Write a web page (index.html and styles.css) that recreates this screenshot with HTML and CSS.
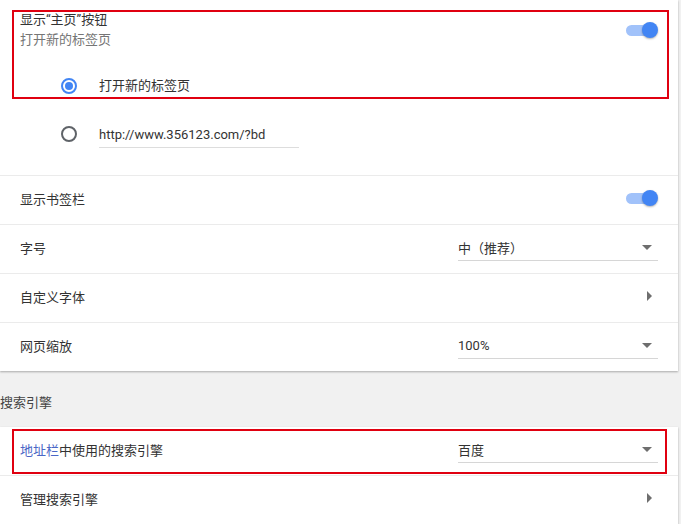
FILE: index.html
```html
<html>
<head>
    <meta charset="utf-8">
    <link rel="stylesheet" href="styles.css">
</head>
<body>
    <div class="page">
        <div class="card">
            <div class="home">
                <div class="home-head">
                    <div class="home-text">
                        <div class="label">显示“主页”按钮</div>
                        <div class="sub">打开新的标签页</div>
                    </div>
                    <span class="toggle"></span>
                </div>
                <div class="radios">
                    <div class="radio-row">
                        <span class="radio checked"></span>
                        <span class="label">打开新的标签页</span>
                    </div>
                    <div class="radio-row">
                        <span class="radio"></span>
                        <span class="url">http://www.356123.com/?bd</span>
                    </div>
                </div>
                <div class="mark mark-home"></div>
            </div>
            <div class="row">
                <span class="label">显示书签栏</span>
                <span class="toggle"></span>
            </div>
            <div class="row">
                <span class="label">字号</span>
                <div class="select"><span class="cjk">中（推荐）</span><i class="arrow-down"></i></div>
            </div>
            <div class="row">
                <span class="label">自定义字体</span>
                <i class="arrow-right"></i>
            </div>
            <div class="row">
                <span class="label">网页缩放</span>
                <div class="select"><span>100%</span><i class="arrow-down"></i></div>
            </div>
        </div>

        <div class="section-title">搜索引擎</div>

        <div class="card">
            <div class="row">
                <span class="label"><span class="link">地址栏</span>中使用的搜索引擎</span>
                <div class="select"><span>百度</span><i class="arrow-down"></i></div>
                <div class="mark mark-engine"></div>
            </div>
            <div class="row">
                <span class="label">管理搜索引擎</span>
                <i class="arrow-right"></i>
            </div>
        </div>
    </div>
</body>
</html>
```

FILE: styles.css
```css
html, body{
    margin: 0;
    padding: 0;
    background: #f1f1f1;
    font-family: Roboto, "Noto Sans CJK SC", sans-serif;
    font-size: 13px;
    color: #333;
}
.page{
    width: 681px;
}
.card{
    width: 678px;
    background: #fff;
    box-shadow: 0 1px 2px rgba(0,0,0,.3);
}
.home{
    position: relative;
    padding: 10px 20px 17px;
    border-bottom: 1px solid #ebebeb;
}
.home-head{
    display: flex;
    align-items: center;
    justify-content: space-between;
}
.home-text div{
    line-height: 20px;
}
.sub{
    color: #757575;
}
.radios{
    margin-top: 12px;
}
.radio-row{
    display: flex;
    align-items: center;
    height: 48px;
    padding-left: 41px;
}
.radio-row .label{
    margin-bottom: 4px;
}
.radio{
    box-sizing: border-box;
    width: 16px;
    height: 16px;
    border: 2px solid #5f6368;
    border-radius: 50%;
    margin-right: 22px;
    position: relative;
}
.radio.checked{
    border-color: #4285f4;
}
.radio.checked::after{
    content: "";
    position: absolute;
    left: 2px;
    top: 2px;
    width: 8px;
    height: 8px;
    border-radius: 50%;
    background: #4285f4;
}
.url{
    width: 200px;
    line-height: 24px;
    border-bottom: 1px solid #ddd;
    margin-top: 2px;
}
.toggle{
    position: relative;
    width: 32px;
    height: 16px;
}
.toggle::before{
    content: "";
    position: absolute;
    left: 0;
    top: 3px;
    width: 28px;
    height: 11px;
    border-radius: 6px;
    background: #a1c2fa;
}
.toggle::after{
    content: "";
    position: absolute;
    right: 0;
    top: 0;
    width: 16px;
    height: 16px;
    border-radius: 50%;
    background: #4285f4;
    box-shadow: 0 1px 2px rgba(0,0,0,.3);
}
.row{
    position: relative;
    display: flex;
    align-items: center;
    justify-content: space-between;
    height: 44px;
    padding: 0 20px 4px;
    border-top: 1px solid #ebebeb;
}
.row:first-child,
.home + .row{
    border-top: 0;
}
.select{
    display: flex;
    align-items: center;
    justify-content: space-between;
    width: 200px;
    height: 24px;
    border-bottom: 1px solid #d6d6d6;
    margin-top: 2px;
}
.cjk{
    font-family: "Noto Sans CJK SC", sans-serif;
    font-feature-settings: "halt" 0, "chws" 0;
    text-spacing-trim: space-all;
}
.arrow-down{
    width: 0;
    height: 0;
    border-left: 5px solid transparent;
    border-right: 5px solid transparent;
    border-top: 5px solid #6e6e6e;
    margin-right: 6px;
}
.arrow-right{
    width: 0;
    height: 0;
    border-top: 5px solid transparent;
    border-bottom: 5px solid transparent;
    border-left: 5px solid #6e6e6e;
    margin-right: 6px;
}
.section-title{
    padding: 12px 0 4px;
    line-height: 40px;
    color: #444;
}
.link{
    color: #4a67c6;
}
.mark{
    position: absolute;
    box-sizing: border-box;
    border: 2px solid #e00010;
}
.mark-home{
    left: 12px;
    top: 10px;
    width: 657px;
    height: 89px;
}
.mark-engine{
    left: 12px;
    top: 2px;
    width: 655px;
    height: 45px;
}
```
